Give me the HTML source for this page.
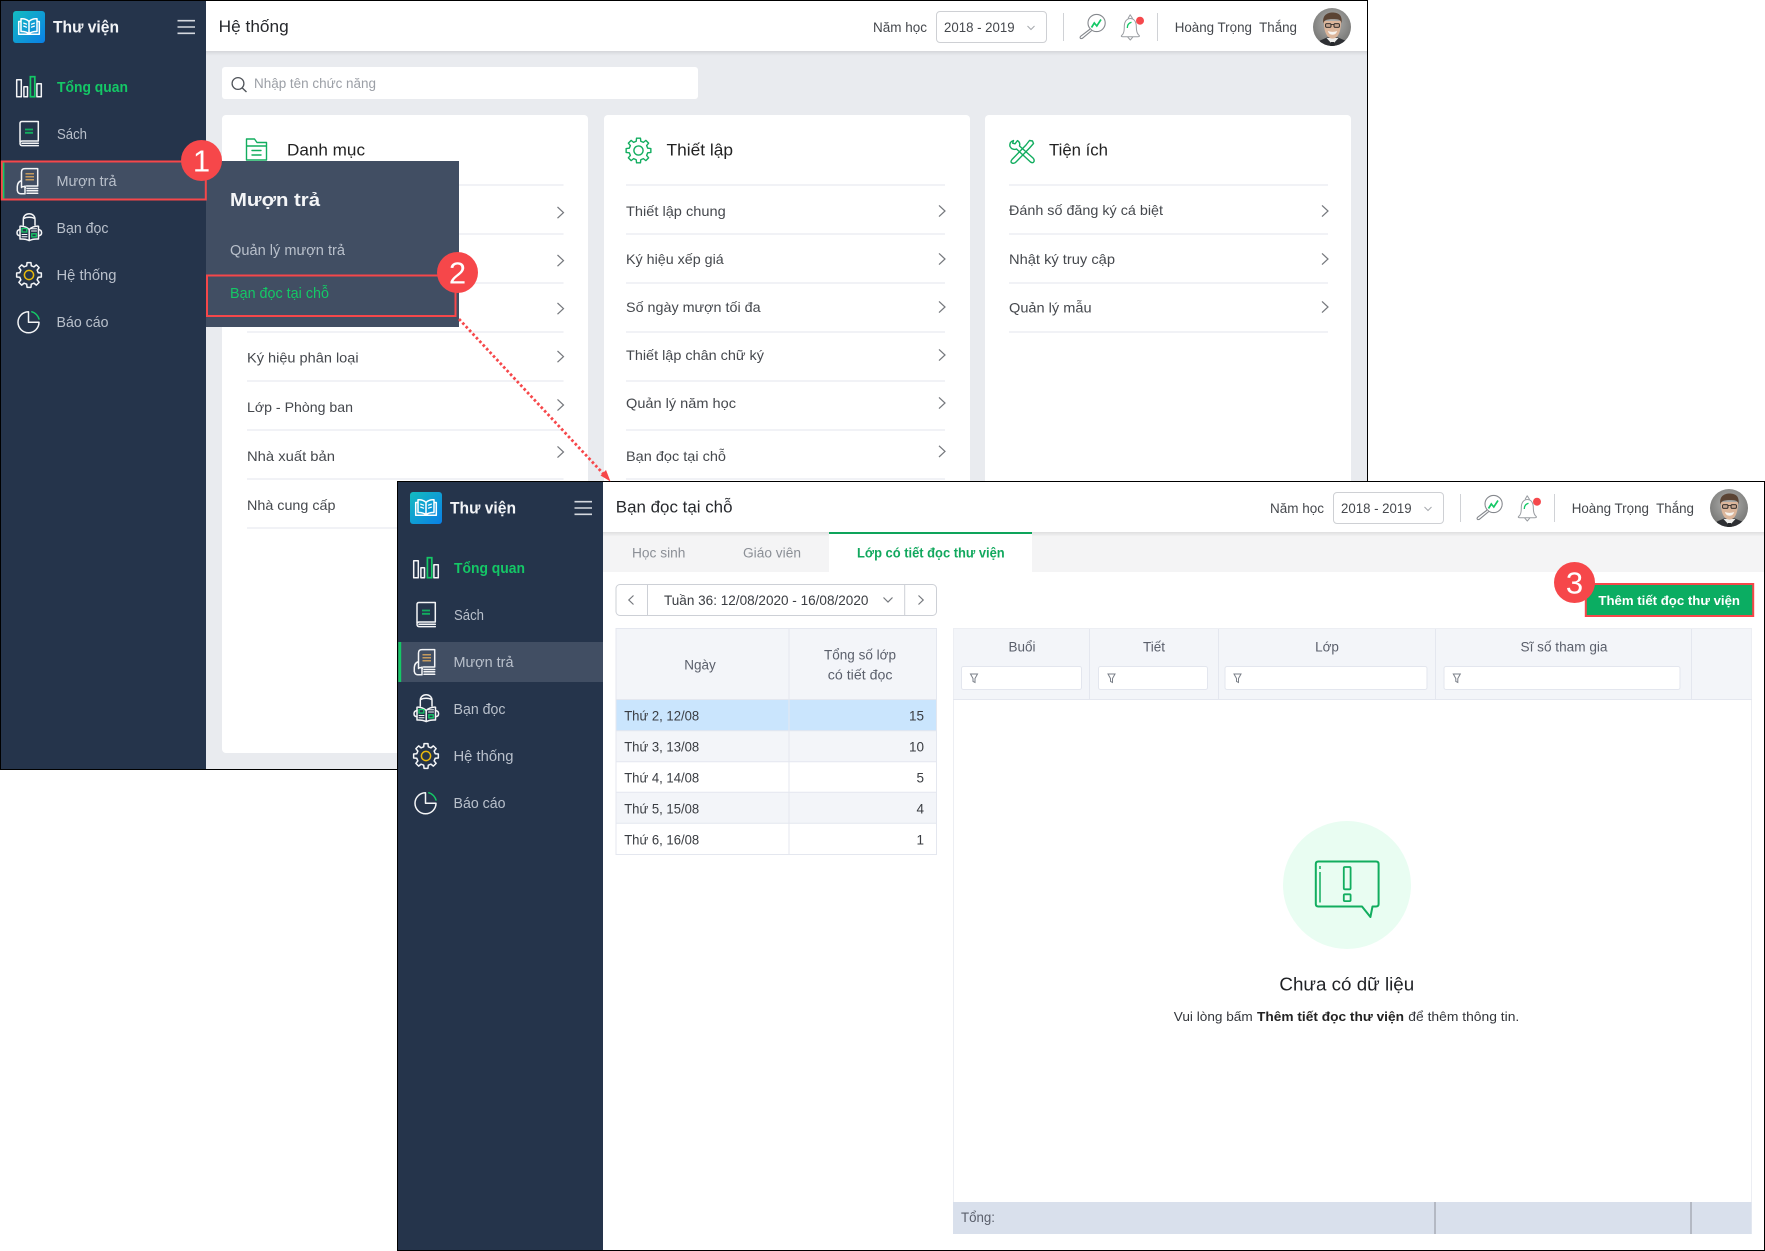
<!DOCTYPE html>
<html lang="vi"><head><meta charset="utf-8"><title>Thư viện</title>
<style>
html,body{margin:0;padding:0;background:#fff;width:1765px;height:1251px;overflow:hidden}
svg{display:block}
text{font-family:"Liberation Sans","Noto Sans CJK SC",sans-serif;font-size:14px;fill:#45484d}
.h{font-size:17px;fill:#26282c}
.ct{font-size:16.5px;fill:#222}
.nav{font-size:14.5px;fill:#b9c0cb}
.navg{font-size:14.5px;fill:#14c866;font-weight:bold}
.logo{font-size:16.5px;fill:#f2f4f7;font-weight:bold}
.fly{font-size:14.5px;fill:#b9c0cb}
.sm{font-size:13.5px;fill:#45484d}
.th{font-size:13.5px;fill:#5a5f6b}
.td{font-size:13.5px;fill:#3a3d42}
.badge{font-size:31px;fill:#fff}
.ln{stroke:#f1f2f6;stroke-width:2}
.chev{fill:none;stroke:#75787d;stroke-width:1.2}
.gs{fill:none;stroke:#12ad5f;stroke-width:1.4;stroke-linejoin:round;stroke-linecap:round}
.ws{fill:none;stroke:#f4f5f7;stroke-width:1.5;stroke-linejoin:round;stroke-linecap:round}
.inp{fill:#fff;stroke:#e3e6ee;stroke-width:1}
.fn{fill:none;stroke:#7a7f88;stroke-width:1}
</style></head><body>
<svg xmlns="http://www.w3.org/2000/svg" width="1765" height="1251" viewBox="0 0 1765 1251">
<defs>
<linearGradient id="lg" x1="0" y1="0" x2="1" y2="1"><stop offset="0" stop-color="#14bcc0"/><stop offset="1" stop-color="#0a7fe6"/></linearGradient>
<linearGradient id="hs" x1="0" y1="0" x2="0" y2="1"><stop offset="0" stop-color="#000" stop-opacity=".09"/><stop offset="1" stop-color="#000" stop-opacity="0"/></linearGradient>
<radialGradient id="av" cx=".5" cy=".4" r=".7"><stop offset="0" stop-color="#b4b4b2"/><stop offset="1" stop-color="#6c6c6a"/></radialGradient>
<clipPath id="avc"><circle cx="1332" cy="27" r="19"/></clipPath>

<path id="gear" d="M9.22 -2.3L12.35 -1.96L12.35 1.96L9.22 2.3L8.14 4.89L10.11 7.35L7.35 10.11L4.89 8.14L2.3 9.22L1.96 12.35L-1.96 12.35L-2.3 9.22L-4.89 8.14L-7.35 10.11L-10.11 7.35L-8.14 4.89L-9.22 2.3L-12.35 1.96L-12.35 -1.96L-9.22 -2.3L-8.14 -4.89L-10.11 -7.35L-7.35 -10.11L-4.89 -8.14L-2.3 -9.22L-1.96 -12.35L1.96 -12.35L2.3 -9.22L4.89 -8.14L7.35 -10.11L10.11 -7.35L8.14 -4.89Z"/>

<g id="chrome">
  <rect x="13" y="11" width="32" height="32" rx="3" fill="url(#lg)"/>
  <g fill="none" stroke="#fff" stroke-width="1.5" stroke-linejoin="round">
    <path d="M29 21.5C27 19.5 24 18.6 21 18.8V31.5C24 31.3 26.8 32 29 33.6C31.2 32 34 31.3 37 31.5V18.8C34 18.6 31 19.5 29 21.5ZM29 21.5V33.6"/>
    <path d="M21 21.5H18.7V34.2H39.3V21.5H37"/>
    <path d="M23.3 23L27 24.3M23.3 26L27 27.3M31 24.3L34.8 23M31 27.3L34.8 26" stroke-width="1.2"/>
  </g>
  <path d="M177.5 20.7H195M177.5 27H195M177.5 33.3H195" stroke="#d5d9df" stroke-width="1.6"/>
  <g class="ws">
    <rect x="16.7" y="79.7" width="4.6" height="17"/>
    <rect x="23.9" y="86.7" width="3.6" height="10"/>
    <rect x="36.9" y="83.7" width="4.4" height="13"/>
  </g>
  <rect x="30.4" y="76.7" width="4.4" height="20" fill="none" stroke="#14c866" stroke-width="1.7"/>
  <path class="ws" d="M20 142V123.5Q20 121.5 22 121.5H38.3V141H22.5Q20 141 20 143.2Q20 145.6 22.5 145.6H38.3M22 143.2H38.3"/>
  <path d="M25 129.5H33M25 132.8H33" stroke="#12ad5f" stroke-width="1.8" fill="none"/>
  <path class="ws" d="M21.5 185V172Q21.5 168.6 25 168.6H37.7V186H26.5M27 188.5H37.7M27 190.8H37.7M27 193.2H37.7M21.5 180.5Q17.5 182 17.3 186.5V190.5Q18 193.8 20.8 193.8M21.5 180V187.5M25 186V193.8H20.8M21.5 187C23 186.4 25 186.5 25.5 187.5"/>
  <path d="M25.5 173.8H34M25.5 176.8H34M25.5 179.8H34" stroke="#f0b45c" stroke-width="1.1" fill="none"/>
  <g class="ws">
    <path d="M23.3 225V219.5C23.3 211.8 35 211.8 35 219.5V225M23.5 218.6C26.5 216.8 31.8 216.8 34.8 218.6"/>
    <path d="M29.2 229.5C26.5 227 23 226 20 226.2V239C23 238.8 26.5 239.2 29.2 240.6C32 239.2 35.5 238.8 38.5 239V226.2C35.5 226 32 227 29.2 229.5ZM29.2 229.5V240.6"/>
    <path d="M20 229.5Q17 230 17 232.7Q17 235.4 20 235.7M38.5 229.5Q41.6 230 41.6 232.7Q41.6 235.4 38.5 235.7"/>
    <path d="M22 234.5H27M22 236.8H27M31.5 228.8H36.5M31.5 231H36.5" stroke-width="1"/>
  </g>
  <path d="M22 228.5H26.8V232H22ZM31.8 233.8H36.3V236.8H31.8Z" fill="none" stroke="#14c866" stroke-width="1.3"/>
  <use href="#gear" transform="translate(29 275)" class="ws"/>
  <circle cx="29" cy="275" r="4.6" fill="none" stroke="#e8b90c" stroke-width="1.5"/>
  <path class="ws" d="M28.5 311.8A10.5 10.5 0 1 0 39 322.3H28.5Z"/>
  <path d="M31.2 311.6A10.6 10.6 0 0 1 39.2 319.6" fill="none" stroke="#14c866" stroke-width="1.4"/>
  <rect x="936.5" y="11.5" width="110" height="31" rx="3.5" fill="#fff" stroke="#ced0d4"/>
  <path d="M1027.5 26L1031 29.5L1034.5 26" fill="none" stroke="#a5a8ad" stroke-width="1"/>
  <path d="M1063.5 13V41M1157.5 13V41" stroke="#d0d2d6"/>
  <circle cx="1096.6" cy="23" r="8.6" fill="#fff" stroke="#85888d" stroke-width="1.1"/>
  <path d="M1090.2 29L1080.6 36.3Q1079.4 37.9 1080.9 38.6Q1082 38.8 1083 37.8L1091.7 30.6" fill="#fff" stroke="#85888d" stroke-width="1.1" stroke-linejoin="round"/>
  <path d="M1091.5 27.5L1094.3 23L1096.8 26L1101 19.5" fill="none" stroke="#14c866" stroke-width="1.7"/>
  <path d="M1128 18.5L1130.2 14.8L1132.6 18.5M1122.3 34.8C1125 32 1124 28 1124.4 24.8C1125 20 1128 18.5 1130.3 18.5C1133 18.5 1135.6 20.3 1136.2 24.8C1136.6 28 1135.7 32 1138.5 34.8Q1140.7 36.4 1138 36.8H1122.7Q1120 36.4 1122.3 34.8ZM1127.5 36.8L1130.3 40L1133 36.8" fill="#fff" stroke="#9a9da2" stroke-width="1" stroke-linejoin="round"/>
  <path d="M1127.3 28Q1127.2 23.5 1131.5 22.3" fill="none" stroke="#14c866" stroke-width="1.3"/>
  <circle cx="1140" cy="20.7" r="4" fill="#f5484c"/>
  <g clip-path="url(#avc)">
    <rect x="1313" y="8" width="38" height="38" fill="url(#av)"/>
    <path d="M1318 46L1320 40.5L1327 37.5H1338L1345 40.5L1348 46Z" fill="#2e3034"/>
    <path d="M1326.5 38L1332.5 44.5L1338.5 38Z" fill="#eeeeec"/>
    <path d="M1331 42L1334 42L1335 46H1330Z" fill="#26282c"/>
    <path d="M1323.8 21C1323.8 33 1327.5 38.6 1332.5 38.6C1337.5 38.6 1341 33 1341 21Z" fill="#dcb69b"/>
    <path d="M1323.3 23.5C1322 15 1327.5 12.3 1333.3 12.5C1339 12.8 1342.6 15.5 1341.6 23.5C1341 20.5 1339.8 19.5 1336.5 19.2C1332.5 19 1328 19 1326 20C1324.5 20.8 1323.7 21.8 1323.3 23.5Z" fill="#5b4434"/>
    <rect x="1325.6" y="23.7" width="5.4" height="3.6" rx="1" fill="#c6a48e" stroke="#1e1e1e" stroke-width=".9"/>
    <rect x="1334" y="23.7" width="5.4" height="3.6" rx="1" fill="#c6a48e" stroke="#1e1e1e" stroke-width=".9"/>
    <path d="M1331 24.6H1334" stroke="#1e1e1e" stroke-width=".8"/>
    <path d="M1327.8 31Q1332.5 32.8 1337.2 31Q1336 34.8 1332.5 34.8Q1329 34.8 1327.8 31Z" fill="#f7f4ef"/>
  </g>
  <path d="M206 51H1367V55.5H206Z" fill="url(#hs)"/>
</g>
</defs>

<!-- WINDOW 1 -->
<rect x="0" y="0" width="1368" height="770" fill="#e9ebef"/>
<rect x="206" y="0" width="1162" height="51" fill="#fff"/>
<rect x="0" y="0" width="206" height="770" fill="#25344b"/>
<rect x="1" y="161" width="205" height="39" fill="#414e63"/>
<rect x="2" y="161" width="2.4" height="39" fill="#14c866"/>
<use href="#chrome"/>
<text x="53" y="32.5" textLength="66" lengthAdjust="spacingAndGlyphs" class="logo">Thư viện</text>
<text x="57" y="92" textLength="71" lengthAdjust="spacingAndGlyphs" class="navg">Tổng quan</text>
<text x="57" y="139" textLength="30" lengthAdjust="spacingAndGlyphs" class="nav">Sách</text>
<text x="56.5" y="186" textLength="60" lengthAdjust="spacingAndGlyphs" class="nav">Mượn trả</text>
<text x="56.5" y="233" textLength="52" lengthAdjust="spacingAndGlyphs" class="nav">Bạn đọc</text>
<text x="56.5" y="280" textLength="60" lengthAdjust="spacingAndGlyphs" class="nav">Hệ thống</text>
<text x="56.5" y="327" textLength="52" lengthAdjust="spacingAndGlyphs" class="nav">Báo cáo</text>
<text x="218.7" y="32" textLength="70" lengthAdjust="spacingAndGlyphs" class="h">Hệ thống</text>
<text x="873" y="32" textLength="54" lengthAdjust="spacingAndGlyphs" class="sm">Năm học</text>
<text x="944" y="32" textLength="70.6" lengthAdjust="spacingAndGlyphs" class="sm">2018 - 2019</text>
<text x="1174.7" y="32" textLength="122.3" lengthAdjust="spacingAndGlyphs" class="sm" xml:space="preserve">Hoàng Trọng  Thắng</text>

<rect x="222" y="67" width="476" height="32" rx="3" fill="#fff"/>
<circle cx="238" cy="83.5" r="5.9" fill="none" stroke="#50545a" stroke-width="1.3"/>
<path d="M242.3 88L246.5 92" stroke="#50545a" stroke-width="1.4"/>
<text x="254" y="88" textLength="122" lengthAdjust="spacingAndGlyphs" style="font-size:13.5px;fill:#9b9fa6">Nhập tên chức năng</text>

<rect x="222" y="115" width="366" height="638" rx="4" fill="#fff"/>
<rect x="604" y="115" width="366" height="638" rx="4" fill="#fff"/>
<rect x="985" y="115" width="366" height="638" rx="4" fill="#fff"/>

<path class="gs" d="M246.5 160V139H254.5L257 142.5H266.5V160ZM246.5 146H266.5M252 150.5H261M252 155H261" />
<text x="287" y="155.6" textLength="78" lengthAdjust="spacingAndGlyphs" class="ct">Danh mục</text>
<path class="ln" d="M247 185H563.5M247 234H563.5M247 283H563.5M247 332H563.5M247 381H563.5M247 430H563.5M247 479H563.5M247 528H563.5"/>
<text x="247" y="362.7" textLength="111.6" lengthAdjust="spacingAndGlyphs">Ký hiệu phân loại</text>
<text x="247" y="412" textLength="106" lengthAdjust="spacingAndGlyphs">Lớp - Phòng ban</text>
<text x="247" y="461" textLength="88" lengthAdjust="spacingAndGlyphs">Nhà xuất bản</text>
<text x="247" y="510" textLength="88.5" lengthAdjust="spacingAndGlyphs">Nhà cung cấp</text>
<path class="chev" d="M557.5 207L563.5 212.6L557.5 218.2M557.5 255L563.5 260.6L557.5 266.2M557.5 303L563.5 308.6L557.5 314.2M557.5 351L563.5 356.6L557.5 362.2M557.5 399.4L563.5 405L557.5 410.6M557.5 446.4L563.5 452L557.5 457.6"/>

<use href="#gear" transform="translate(638.5 150.5)" class="gs"/>
<circle cx="638.5" cy="150.5" r="4.6" class="gs"/>
<text x="666.5" y="155.6" textLength="66.5" lengthAdjust="spacingAndGlyphs" class="ct">Thiết lập</text>
<path class="ln" d="M626 185H945M626 234H945M626 283H945M626 332H945M626 381H945M626 430H945M626 479H945"/>
<text x="626" y="216" textLength="99.7" lengthAdjust="spacingAndGlyphs">Thiết lập chung</text>
<text x="626" y="264" textLength="97.7" lengthAdjust="spacingAndGlyphs">Ký hiệu xếp giá</text>
<text x="626" y="312" textLength="134.6" lengthAdjust="spacingAndGlyphs">Số ngày mượn tối đa</text>
<text x="626" y="360" textLength="138" lengthAdjust="spacingAndGlyphs">Thiết lập chân chữ ký</text>
<text x="626" y="408" textLength="110" lengthAdjust="spacingAndGlyphs">Quản lý năm học</text>
<text x="626" y="461" textLength="100" lengthAdjust="spacingAndGlyphs">Bạn đọc tại chỗ</text>
<path class="chev" d="M939 205.4L945 211L939 216.6M939 253.4L945 259L939 264.6M939 301.4L945 307L939 312.6M939 349.4L945 355L939 360.6M939 397.4L945 403L939 408.6M939 445.8L945 451.4L939 457"/>

<g class="gs">
  <path d="M1032.5 141L1029.5 140.5L1026 145L1012 159.5Q1010 162 1012 163Q1014 164 1016 162L1030 147.5L1033.5 143.5Z"/>
  <path d="M1013.5 140.5Q1009 142 1010 146.5L1011.5 148.5Q1014.5 150 1016.5 149L1030.5 162Q1033 163.6 1034 161.5Q1034.6 159.6 1033 158L1019.5 146Q1020.5 142.5 1017.5 140.6L1015 143.8L1012.6 143.2Z"/>
</g>
<text x="1049" y="155.6" textLength="59" lengthAdjust="spacingAndGlyphs" class="ct">Tiện ích</text>
<path class="ln" d="M1009 185H1328M1009 234H1328M1009 283H1328M1009 332H1328"/>
<text x="1009" y="215" textLength="154" lengthAdjust="spacingAndGlyphs">Đánh số đăng ký cá biệt</text>
<text x="1009" y="264" textLength="106" lengthAdjust="spacingAndGlyphs">Nhật ký truy cập</text>
<text x="1009" y="312.7" textLength="82.6" lengthAdjust="spacingAndGlyphs">Quản lý mẫu</text>
<path class="chev" d="M1322 205.4L1328 211L1322 216.6M1322 253.4L1328 259L1322 264.6M1322 301.4L1328 307L1322 312.6"/>

<rect x="206" y="161" width="253" height="166" fill="#414e63"/>
<text x="230" y="206" textLength="90" lengthAdjust="spacingAndGlyphs" style="font-size:18px;font-weight:bold;fill:#f4f5f7">Mượn trả</text>
<text x="230" y="255" textLength="115" lengthAdjust="spacingAndGlyphs" class="fly">Quản lý mượn trả</text>
<text x="230" y="298" textLength="99" lengthAdjust="spacingAndGlyphs" style="font-size:14.5px;fill:#14c866">Bạn đọc tại chỗ</text>

<rect x="0.5" y="0.5" width="1367" height="769" fill="none" stroke="#000"/>
<rect x="1.8" y="161.5" width="204" height="38" fill="none" stroke="#f6474a" stroke-width="2"/>
<rect x="207" y="275.5" width="248.5" height="40.5" fill="none" stroke="#f6474a" stroke-width="2"/>

<!-- WINDOW 2 -->
<rect x="397" y="481" width="1368" height="770" fill="#fff"/>
<rect x="397" y="481" width="206" height="770" fill="#25344b"/>
<rect x="398" y="642" width="205" height="40" fill="#414e63"/>
<rect x="398.4" y="642" width="2.8" height="40" fill="#14c866"/>
<rect x="603" y="532" width="1162" height="40" fill="#f4f4f5"/>
<use href="#chrome" transform="translate(397 481)"/>
<text x="450" y="513.5" textLength="66" lengthAdjust="spacingAndGlyphs" class="logo">Thư viện</text>
<text x="454" y="573" textLength="71" lengthAdjust="spacingAndGlyphs" class="navg">Tổng quan</text>
<text x="454" y="620" textLength="30" lengthAdjust="spacingAndGlyphs" class="nav">Sách</text>
<text x="453.5" y="667" textLength="60" lengthAdjust="spacingAndGlyphs" class="nav">Mượn trả</text>
<text x="453.5" y="714" textLength="52" lengthAdjust="spacingAndGlyphs" class="nav">Bạn đọc</text>
<text x="453.5" y="761" textLength="60" lengthAdjust="spacingAndGlyphs" class="nav">Hệ thống</text>
<text x="453.5" y="808" textLength="52" lengthAdjust="spacingAndGlyphs" class="nav">Báo cáo</text>
<text x="615.8" y="512.7" textLength="116.7" lengthAdjust="spacingAndGlyphs" class="h">Bạn đọc tại chỗ</text>
<text x="1270" y="513" textLength="54" lengthAdjust="spacingAndGlyphs" class="sm">Năm học</text>
<text x="1341" y="513" textLength="70.6" lengthAdjust="spacingAndGlyphs" class="sm">2018 - 2019</text>
<text x="1571.7" y="513" textLength="122.3" lengthAdjust="spacingAndGlyphs" class="sm" xml:space="preserve">Hoàng Trọng  Thắng</text>

<rect x="829" y="532" width="203" height="40" fill="#fff"/>
<rect x="829" y="532" width="203" height="2" fill="#0ea45b"/>
<text x="632" y="557.3" textLength="53.4" lengthAdjust="spacingAndGlyphs" style="font-size:13.5px;fill:#8b8f96">Học sinh</text>
<text x="743" y="557.3" textLength="58" lengthAdjust="spacingAndGlyphs" style="font-size:13.5px;fill:#8b8f96">Giáo viên</text>
<text x="857" y="557.3" textLength="147.7" lengthAdjust="spacingAndGlyphs" style="font-size:13.5px;fill:#12a85e;font-weight:bold">Lớp có tiết đọc thư viện</text>

<rect x="616" y="584.5" width="320.5" height="31" rx="4" fill="#fff" stroke="#cdd0d6"/>
<path d="M647.5 585V615M904.7 585V615" stroke="#cdd0d6"/>
<path class="chev" d="M633.5 595.5L628.8 600L633.5 604.5M918.5 595.5L923.2 600L918.5 604.5M883.5 597.5L888 602L892.5 597.5"/>
<text x="664" y="605" textLength="204.4" lengthAdjust="spacingAndGlyphs" class="td">Tuần 36: 12/08/2020 - 16/08/2020</text>

<rect x="616" y="628.5" width="320.5" height="226" fill="#fff" stroke="#e4e7ef"/>
<rect x="616.5" y="629" width="319.5" height="70" fill="#f3f5f9"/>
<rect x="616.5" y="699.5" width="319.5" height="31" fill="#cae5fd"/>
<rect x="616.5" y="731" width="319.5" height="30.5" fill="#f3f5f9"/>
<rect x="616.5" y="792.5" width="319.5" height="30.5" fill="#f3f5f9"/>
<path d="M616 699.5H936M616 730.7H936M616 761.7H936M616 792.3H936M616 823.3H936M789 629V854" stroke="#e4e7ef"/>
<text x="700" y="669.3" text-anchor="middle" class="th">Ngày</text>
<text x="824" y="659.3" textLength="72" lengthAdjust="spacingAndGlyphs" class="th">Tổng số lớp</text>
<text x="827.8" y="679.3" textLength="64.7" lengthAdjust="spacingAndGlyphs" class="th">có tiết đọc</text>
<text x="624.2" y="720.7" textLength="75" lengthAdjust="spacingAndGlyphs" class="td">Thứ 2, 12/08</text>
<text x="624.2" y="751.7" textLength="75" lengthAdjust="spacingAndGlyphs" class="td">Thứ 3, 13/08</text>
<text x="624.2" y="782.7" textLength="75" lengthAdjust="spacingAndGlyphs" class="td">Thứ 4, 14/08</text>
<text x="624.2" y="813.5" textLength="75" lengthAdjust="spacingAndGlyphs" class="td">Thứ 5, 15/08</text>
<text x="624.2" y="844.7" textLength="75" lengthAdjust="spacingAndGlyphs" class="td">Thứ 6, 16/08</text>
<text x="924" y="720.7" text-anchor="end" class="td">15</text>
<text x="924" y="751.7" text-anchor="end" class="td">10</text>
<text x="924" y="782.7" text-anchor="end" class="td">5</text>
<text x="924" y="813.5" text-anchor="end" class="td">4</text>
<text x="924" y="844.7" text-anchor="end" class="td">1</text>

<rect x="953.5" y="628.5" width="798" height="605" fill="#fff" stroke="#eceef3"/>
<rect x="954" y="629" width="797" height="70" fill="#f3f5f9"/>
<path d="M953 699.5H1752" stroke="#e4e7ef"/>
<path d="M1089.5 629V699M1218.5 629V699M1435.5 629V699M1691.5 629V699" stroke="#e4e7ef"/>
<text x="1022" y="651.7" text-anchor="middle" class="th">Buổi</text>
<text x="1154" y="651.7" text-anchor="middle" class="th">Tiết</text>
<text x="1327" y="651.7" text-anchor="middle" class="th">Lớp</text>
<text x="1520.5" y="651.7" textLength="87" lengthAdjust="spacingAndGlyphs" class="th">Sĩ số tham gia</text>
<rect class="inp" x="961.5" y="666.5" width="120" height="23" rx="2"/>
<rect class="inp" x="1098.5" y="666.5" width="109" height="23" rx="2"/>
<rect class="inp" x="1225" y="666.5" width="202" height="23" rx="2"/>
<rect class="inp" x="1444" y="666.5" width="236" height="23" rx="2"/>
<path class="fn" d="M970.5 674H977.5L975 678.5V682.5L973 681.5V678.5ZM1108 674H1115L1112.5 678.5V682.5L1110.5 681.5V678.5ZM1234 674H1241L1238.5 678.5V682.5L1236.5 681.5V678.5ZM1453.3 674H1460.3L1457.8 678.5V682.5L1455.8 681.5V678.5Z"/>

<rect x="953" y="1202" width="798.5" height="32" fill="#d9e0ec"/>
<path d="M1435 1202V1234M1691 1202V1234" stroke="#a5a9b2" stroke-width="1.4"/>
<text x="961" y="1222" textLength="34" lengthAdjust="spacingAndGlyphs" class="th">Tổng:</text>

<ellipse cx="1347" cy="885" rx="64" ry="64" fill="#e9fdf2"/>
<path d="M1318.3 861.5H1376Q1378.6 861.5 1378.6 864V904Q1378.6 906.5 1376 906.5H1372.5L1370.4 917L1362 906.5H1318.3Q1315.8 906.5 1315.8 904V864Q1315.8 861.5 1318.3 861.5Z" fill="none" stroke="#12ad5f" stroke-width="2" stroke-linejoin="round"/>
<path d="M1320 866V869M1320 872V902.5" stroke="#12ad5f" stroke-width="1.5" fill="none"/>
<rect x="1343.8" y="867" width="6.8" height="22.3" rx="1" fill="none" stroke="#12ad5f" stroke-width="1.8"/>
<rect x="1343.8" y="894.3" width="6.8" height="6.8" rx="1" fill="none" stroke="#12ad5f" stroke-width="1.8"/>
<text x="1279.4" y="990.7" textLength="134.8" lengthAdjust="spacingAndGlyphs" style="font-size:18px;fill:#1e2024">Chưa có dữ liệu</text>
<text x="1173.8" y="1021" textLength="78.9" lengthAdjust="spacingAndGlyphs" style="font-size:13px;fill:#33363b">Vui lòng bấm</text>
<text x="1257" y="1021" textLength="147" lengthAdjust="spacingAndGlyphs" style="font-size:13px;font-weight:bold;fill:#222">Thêm tiết đọc thư viện</text>
<text x="1408.3" y="1021" textLength="111" lengthAdjust="spacingAndGlyphs" style="font-size:13px;fill:#33363b">để thêm thông tin.</text>

<rect x="1585.8" y="584" width="167.4" height="32" fill="#0bad62" stroke="#f6474a" stroke-width="2"/>
<text x="1598.4" y="605" textLength="141.6" lengthAdjust="spacingAndGlyphs" style="font-size:13px;font-weight:bold;fill:#fff">Thêm tiết đọc thư viện</text>

<rect x="397.5" y="481.5" width="1367" height="769" fill="none" stroke="#000"/>

<path d="M459 319L604 474.5" fill="none" stroke="#f6474a" stroke-width="2.8" stroke-dasharray="2.6 2.4"/>
<path d="M610.5 481.5L600.5 475.5L606 470Z" fill="#f6474a"/>

<circle cx="201.5" cy="160.5" r="20.5" fill="#f6474a"/>
<text x="201.5" y="171.5" text-anchor="middle" class="badge">1</text>
<circle cx="457.5" cy="272.5" r="20.5" fill="#f6474a"/>
<text x="457.5" y="283.5" text-anchor="middle" class="badge">2</text>
<circle cx="1574.5" cy="582.5" r="20.5" fill="#f6474a"/>
<text x="1574.5" y="593.5" text-anchor="middle" class="badge">3</text>
</svg>
</body></html>
